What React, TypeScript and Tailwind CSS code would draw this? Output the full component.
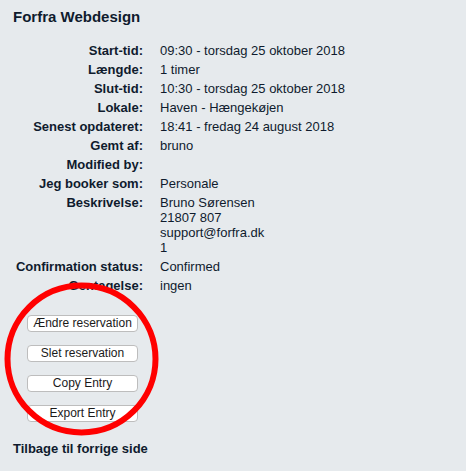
import React from 'react';

const rows: { label: string; value: string[] }[] = [
  { label: 'Start-tid:', value: ['09:30 - torsdag 25 oktober 2018'] },
  { label: 'Længde:', value: ['1 timer'] },
  { label: 'Slut-tid:', value: ['10:30 - torsdag 25 oktober 2018'] },
  { label: 'Lokale:', value: ['Haven - Hængekøjen'] },
  { label: 'Senest opdateret:', value: ['18:41 - fredag 24 august 2018'] },
  { label: 'Gemt af:', value: ['bruno'] },
  { label: 'Modified by:', value: [''] },
  { label: 'Jeg booker som:', value: ['Personale'] },
  { label: 'Beskrivelse:', value: ['Bruno Sørensen', '21807 807', 'support@forfra.dk', '1'] },
  { label: 'Confirmation status:', value: ['Confirmed'] },
  { label: 'Gentagelse:', value: ['ingen'] },
];

const buttons = ['Ændre reservation', 'Slet reservation', 'Copy Entry', 'Export Entry'];

export default function App(): React.ReactElement {
  return (
    <div className="relative h-[471px] w-[466px] overflow-hidden bg-[#e6eaed] font-['Liberation_Sans',Arial,sans-serif] text-[#0f1b2d]">
      <h1 className="pl-[13px] pt-[8px] text-[15px] font-bold leading-[18px]">Forfra Webdesign</h1>

      {/* Details */}
      <div className="mt-[14.5px] grid grid-cols-[143px_1fr] gap-x-[17px] text-[13px] leading-[15px]">
        {rows.map(row => (
          <React.Fragment key={row.label}>
            <div className="py-[2px] text-right font-bold">{row.label}</div>
            <div className="py-[2px]">
              {row.value.map((line, i) => (
                <div key={i} className="h-[15px]">{line}</div>
              ))}
            </div>
          </React.Fragment>
        ))}
      </div>

      {/* Actions */}
      <div className="mt-[20px] flex flex-col gap-[13px] pl-[27px]">
        {buttons.map(b => (
          <button
            key={b}
            type="button"
            className="h-[17px] w-[111px] rounded-[4px] border border-[#bdbdbd] bg-white text-[12px] leading-[15px] text-[#1a1a1a]"
          >
            {b}
          </button>
        ))}
      </div>

      <p className="mt-[19px] pl-[13px] text-[13px] font-bold leading-[15px]">Tilbage til forrige side</p>

      {/* Red annotation circle */}
      <svg className="pointer-events-none absolute left-0 top-0" width="466" height="471">
        <ellipse cx="81.5" cy="359" rx="74" ry="73.5" fill="none" stroke="#ff0000" strokeWidth="6" />
      </svg>
    </div>
  );
}
